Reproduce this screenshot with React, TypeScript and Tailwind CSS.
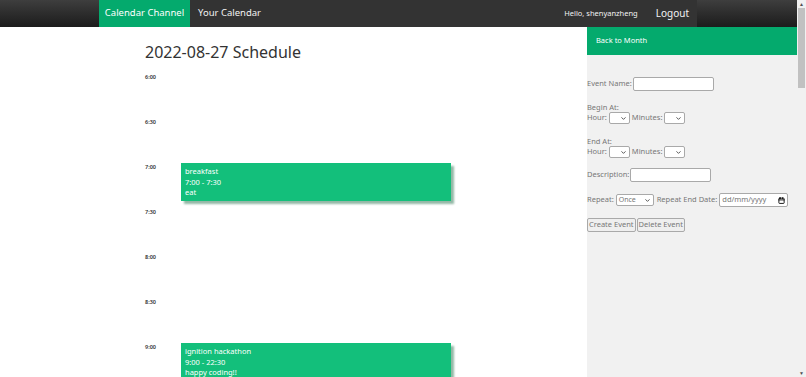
import { ChevronDown, Calendar } from 'lucide-react'

const font = { fontFamily: '"Noto Sans", "Open Sans", sans-serif' }

const times = ['6:00', '6:30', '7:00', '7:30', '8:00', '8:30', '9:00']

type Ev = { at: string; title: string; range: string; desc: string; tall?: boolean }

const events: Ev[] = [
  { at: '7:00', title: 'breakfast', range: '7:00 - 7:30', desc: 'eat' },
  { at: '9:00', title: 'ignition hackathon', range: '9:00 - 22:30', desc: 'happy coding!!', tall: true },
]

function Select({ w, value }: { w: string; value?: string }) {
  return (
    <div className={`${w} shrink-0 h-[12px] bg-white border border-[#a9a9a9] rounded-[2px] flex items-center justify-between pl-[2px] pr-[2px]`}>
      <span className="text-[7px] text-[#777]">{value}</span>
      <ChevronDown className="w-[7px] h-[7px] text-[#444]" strokeWidth={3} />
    </div>
  )
}

function Input({ w }: { w: string }) {
  return <div className={`${w} shrink-0 h-[14px] bg-white border border-[#a9a9a9] rounded-[2px]`} />
}

export default function App() {
  return (
    <div className="w-[806px] h-[377px] overflow-hidden flex bg-white whitespace-nowrap" style={font}>
      <div className="flex-1 flex flex-col min-w-0">
        {/* Navbar */}
        <nav className="h-[27px] shrink-0 bg-gradient-to-b from-[#3e3e3e] to-[#1c1c1c] flex">
          <div className="ml-[99px] w-[598px] bg-[#333] flex items-stretch">
            <a className="bg-[#04aa6d] text-white text-[9.5px] flex items-center justify-center w-[91px]">Calendar Channel</a>
            <a className="text-[#f2f2f2] text-[9.5px] flex items-center pl-[8px]">Your Calendar</a>
            <div className="ml-auto flex items-center">
              <span className="text-[#f2f2f2] text-[7.5px] mr-[18px]">Hello, shenyanzheng</span>
              <a className="text-[#f2f2f2] text-[10px] pr-[8px]">Logout</a>
            </div>
          </div>
        </nav>

        <div className="flex flex-1 min-h-0">
          {/* Schedule */}
          <main className="w-[587px] pl-[145px] pt-[13px] overflow-hidden">
            <h1 className="text-[16px] leading-[24px] text-[#333] mb-[9px]">2022-08-27 Schedule</h1>
            {times.map((t) => {
              const ev = events.find((e) => e.at === t)
              return (
                <div key={t} className="h-[45px] flex items-start">
                  <div className="w-[36px] text-[5.5px] leading-[8px] text-[#333] font-semibold">{t}</div>
                  {ev && (
                    <div
                      className={`w-[270px] ${ev.tall ? 'h-[200px]' : 'h-[38px]'} bg-[#13bf7b] text-white text-[7.5px] leading-[10.5px] px-[4px] pt-[3px] shadow-[3px_3px_2px_#93b8a6]`}
                    >
                      <div>{ev.title}</div>
                      <div>{ev.range}</div>
                      <div>{ev.desc}</div>
                    </div>
                  )}
                </div>
              )
            })}
          </main>

          {/* Sidebar form */}
          <aside className="w-[210px] bg-[#f1f1f1] text-[7.5px] text-[#777]">
            <div className="h-[28px] bg-[#04aa6d] text-white flex items-center pl-[9px]">Back to Month</div>

            <div className="mt-[22px] flex items-center h-[14px]">
              <span className="mr-[1px]">Event Name:</span>
              <Input w="w-[81px]" />
            </div>

            <div className="mt-[11px] leading-[10px]">Begin At:</div>
            <div className="flex items-center h-[12px] gap-[2px]">
              <span>Hour:</span>
              <Select w="w-[21px]" />
              <span>Minutes:</span>
              <Select w="w-[21px]" />
            </div>

            <div className="mt-[12px] leading-[10px]">End At:</div>
            <div className="flex items-center h-[12px] gap-[2px]">
              <span>Hour:</span>
              <Select w="w-[21px]" />
              <span>Minutes:</span>
              <Select w="w-[21px]" />
            </div>

            <div className="mt-[10px] flex items-center h-[14px]">
              <span className="mr-[1px]">Description:</span>
              <Input w="w-[81px]" />
            </div>

            <div className="mt-[11px] flex items-center h-[14px] gap-[2px]">
              <span>Repeat:</span>
              <Select w="w-[38px]" value="Once" />
              <span className="ml-[1px]">Repeat End Date:</span>
              <div className="w-[69px] shrink-0 h-[14px] bg-white border border-[#a9a9a9] rounded-[2px] flex items-center justify-between px-[2px]">
                <span className="text-[7.5px] text-[#777]">dd/mm/yyyy</span>
                <Calendar className="w-[7px] h-[7px] text-black" strokeWidth={3} />
              </div>
            </div>

            <div className="mt-[11px] flex gap-[1px]">
              <button className="h-[14px] px-[1px] border border-[#a9a9a9] bg-[#efefef] text-[7.5px] text-[#777] rounded-[2px]">Create Event</button>
              <button className="h-[14px] px-[1px] border border-[#a9a9a9] bg-[#efefef] text-[7.5px] text-[#777] rounded-[2px]">Delete Event</button>
            </div>
          </aside>
        </div>
      </div>

      {/* Scrollbar */}
      <div className="w-[9px] bg-[#f1f1f1] flex flex-col items-center">
        <div className="text-[5px] leading-[8px] text-[#505050]">▲</div>
        <div className="w-[7px] h-[80px] bg-[#c1c1c1]" />
        <div className="flex-1" />
        <div className="text-[5px] leading-[8px] text-[#505050]">▼</div>
      </div>
    </div>
  )
}
